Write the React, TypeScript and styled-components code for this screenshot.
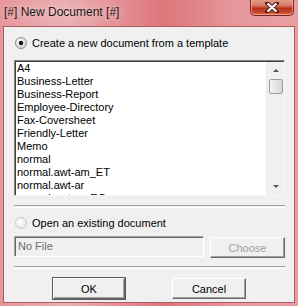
import React, { useState } from "react";
import styled, { createGlobalStyle } from "styled-components";

const GlobalStyle = createGlobalStyle`
  html, body {
    margin: 0;
    padding: 0;
    background: #e48f93;
  }
`;

const Window = styled.div`
  width: 298px;
  height: 306px;
  display: flex;
  flex-direction: column;
  box-sizing: border-box;
  background: linear-gradient(90deg, #e6969a 0%, #eab0b3 22%, #dd767b 55%, #e6999c 80%, #e89fa2 100%);
  font-family: "Liberation Sans", Arial, sans-serif;
`;

const TitleBar = styled.div`
  height: 26px;
  display: flex;
  align-items: flex-start;
  justify-content: space-between;
  padding: 0 4px 0 4px;
  box-sizing: border-box;
`;

const TitleText = styled.div`
  margin-top: 5px;
  font-size: 12px;
  color: #1a1a1a;
  text-shadow: 0 0 6px rgba(255, 236, 236, 0.95);
`;

const CloseButton = styled.div`
  width: 44px;
  height: 17px;
  margin-top: -1px;
  box-sizing: border-box;
  border: 1px solid #7a2620;
  border-top: none;
  border-radius: 0 0 5px 5px;
  background: linear-gradient(180deg, #e89d8f 0%, #d57a68 40%, #b9301c 58%, #c4432a 80%, #e0704a 100%);
  display: flex;
  align-items: center;
  justify-content: center;
  box-shadow: inset 0 0 0 1px rgba(255, 200, 190, 0.55);
`;

const Client = styled.div`
  flex: 1;
  margin: 0 3px 3px 3px;
  border: 1px solid #b05a5f;
  background: #f0f0f0;
  padding: 9px 9px 0 10px;
  box-sizing: border-box;
  display: flex;
  flex-direction: column;
  font-size: 11px;
  color: #000;
`;

const RadioRow = styled.label<{ top: number }>`
  display: flex;
  align-items: center;
  height: 14px;
  margin-top: ${(p) => p.top}px;
  gap: 5px;
  padding-left: 1px;
  cursor: default;
`;

const ListBox = styled.div`
  margin-top: 10px;
  height: 136px;
  box-sizing: border-box;
  border-top: 1px solid #828282;
  border-left: 1px solid #828282;
  border-right: 1px solid #f8f8f8;
  border-bottom: 1px solid #f8f8f8;
  box-shadow: inset 1px 1px 0 #404040;
  background: #fff;
  display: flex;
  overflow: hidden;
`;

const Items = styled.div`
  flex: 1;
  padding: 1px 0 0 2px;
  overflow: hidden;
`;

const Item = styled.div`
  height: 13px;
  line-height: 13px;
  white-space: nowrap;
`;

const ScrollBar = styled.div`
  width: 17px;
  margin: 1px 0 0 0;
  background: #f0f0f0;
  border-left: 1px solid #e8e8e8;
  display: flex;
  flex-direction: column;
  align-items: center;
`;

const Arrow = styled.div<{ down?: boolean }>`
  height: 17px;
  width: 17px;
  display: flex;
  align-items: center;
  justify-content: center;
  &::after {
    content: "";
    border-left: 3px solid transparent;
    border-right: 3px solid transparent;
    ${(p) => (p.down ? "border-top: 3px solid #555;" : "border-bottom: 3px solid #555;")}
  }
`;

const Thumb = styled.div`
  width: 14px;
  height: 15px;
  box-sizing: border-box;
  border: 1px solid #9a9a9a;
  border-radius: 2px;
  background: linear-gradient(90deg, #f2f2f2 0%, #e4e4e4 50%, #d6d6d6 100%);
`;

const Spacer = styled.div`
  flex: 1;
`;

const Separator = styled.div<{ top: number }>`
  margin-top: ${(p) => p.top}px;
  height: 1px;
  border-top: 1px solid #a0a0a0;
  border-bottom: 1px solid #ffffff;
`;

const FileRow = styled.div`
  margin-top: 6px;
  display: flex;
  gap: 6px;
  height: 21px;
`;

const FileField = styled.div`
  width: 190px;
  box-sizing: border-box;
  border-top: 1px solid #a0a0a0;
  border-left: 1px solid #a0a0a0;
  border-right: 1px solid #fff;
  border-bottom: 1px solid #fff;
  box-shadow: inset 1px 1px 0 #696969;
  background: #f0f0f0;
  color: #6d6d6d;
  padding: 3px 0 0 3px;
`;

const Button = styled.button<{ isDefault?: boolean; wide?: number }>`
  width: ${(p) => p.wide ?? 75}px;
  height: ${(p) => (p.isDefault ? 23 : 21)}px;
  margin-top: ${(p) => (p.isDefault ? 0 : 1)}px;
  box-sizing: border-box;
  font-family: "Liberation Sans", Arial, sans-serif;
  font-size: 11px;
  background: #f0f0f0;
  color: ${(p) => (p.disabled ? "#a0a0a0" : "#000")};
  border-top: 1px solid #fff;
  border-left: 1px solid #fff;
  border-right: 1px solid #696969;
  border-bottom: 1px solid #696969;
  box-shadow: inset -1px -1px 0 #a0a0a0;
  padding: 0;
  ${(p) => p.isDefault && "outline: 1px solid #5a5a5a; outline-offset: -1px; border: 2px solid; border-color: #fff #696969 #696969 #fff;"}
`;

const ButtonRow = styled.div`
  margin-top: 8px;
  display: flex;
  justify-content: center;
  gap: 46px;
  padding-right: 1px;
`;

const RadioIcon: React.FC<{ checked: boolean; faded?: boolean }> = ({ checked, faded }) => (
  <svg width="12" height="12" viewBox="0 0 12 12">
    <defs>
      <radialGradient id={faded ? "rgf" : "rg"} cx="0.4" cy="0.35" r="0.7">
        <stop offset="0" stopColor="#ffffff" />
        <stop offset="1" stopColor={faded ? "#e6e6e6" : "#cfcfcf"} />
      </radialGradient>
    </defs>
    <circle cx="6" cy="6" r="5.5" fill={`url(#${faded ? "rgf" : "rg"})`} stroke={faded ? "#c8c8c8" : "#8e8f8f"} />
    {checked && <circle cx="6" cy="6" r="2.2" fill="#111" />}
  </svg>
);

const templates = [
  "A4",
  "Business-Letter",
  "Business-Report",
  "Employee-Directory",
  "Fax-Coversheet",
  "Friendly-Letter",
  "Memo",
  "normal",
  "normal.awt-am_ET",
  "normal.awt-ar",
  "normal.awt-ar_EG",
];

const App: React.FC = () => {
  const [mode, setMode] = useState("template");

  return (
    <Window>
      <GlobalStyle />
      <TitleBar>
        <TitleText>[#] New Document [#]</TitleText>
        <CloseButton>
          <svg width="14" height="11" viewBox="0 0 14 11">
            <path d="M2 1 L12 10 M12 1 L2 10" stroke="#4a1d18" strokeWidth="4" strokeLinecap="square" />
            <path d="M2.5 1.5 L11.5 9.5 M11.5 1.5 L2.5 9.5" stroke="#ffffff" strokeWidth="2.2" />
          </svg>
        </CloseButton>
      </TitleBar>
      <Client>
        <RadioRow top={0} onClick={() => setMode("template")}>
          <RadioIcon checked={mode === "template"} />
          <span>Create a new document from a template</span>
        </RadioRow>
        <ListBox>
          <Items>
            {templates.map((t) => (
              <Item key={t}>{t}</Item>
            ))}
          </Items>
          <ScrollBar>
            <Arrow />
            <Thumb />
            <Spacer />
            <Arrow down />
          </ScrollBar>
        </ListBox>
        <Separator top={9} />
        <RadioRow top={8} onClick={() => setMode("open")}>
          <RadioIcon checked={mode === "open"} faded />
          <span>Open an existing document</span>
        </RadioRow>
        <FileRow>
          <FileField>No File</FileField>
          <Button disabled wide={75}>Choose</Button>
        </FileRow>
        <Separator top={9} />
        <ButtonRow>
          <Button isDefault wide={74}>OK</Button>
          <Button wide={74}>Cancel</Button>
        </ButtonRow>
      </Client>
    </Window>
  );
};

export default App;
